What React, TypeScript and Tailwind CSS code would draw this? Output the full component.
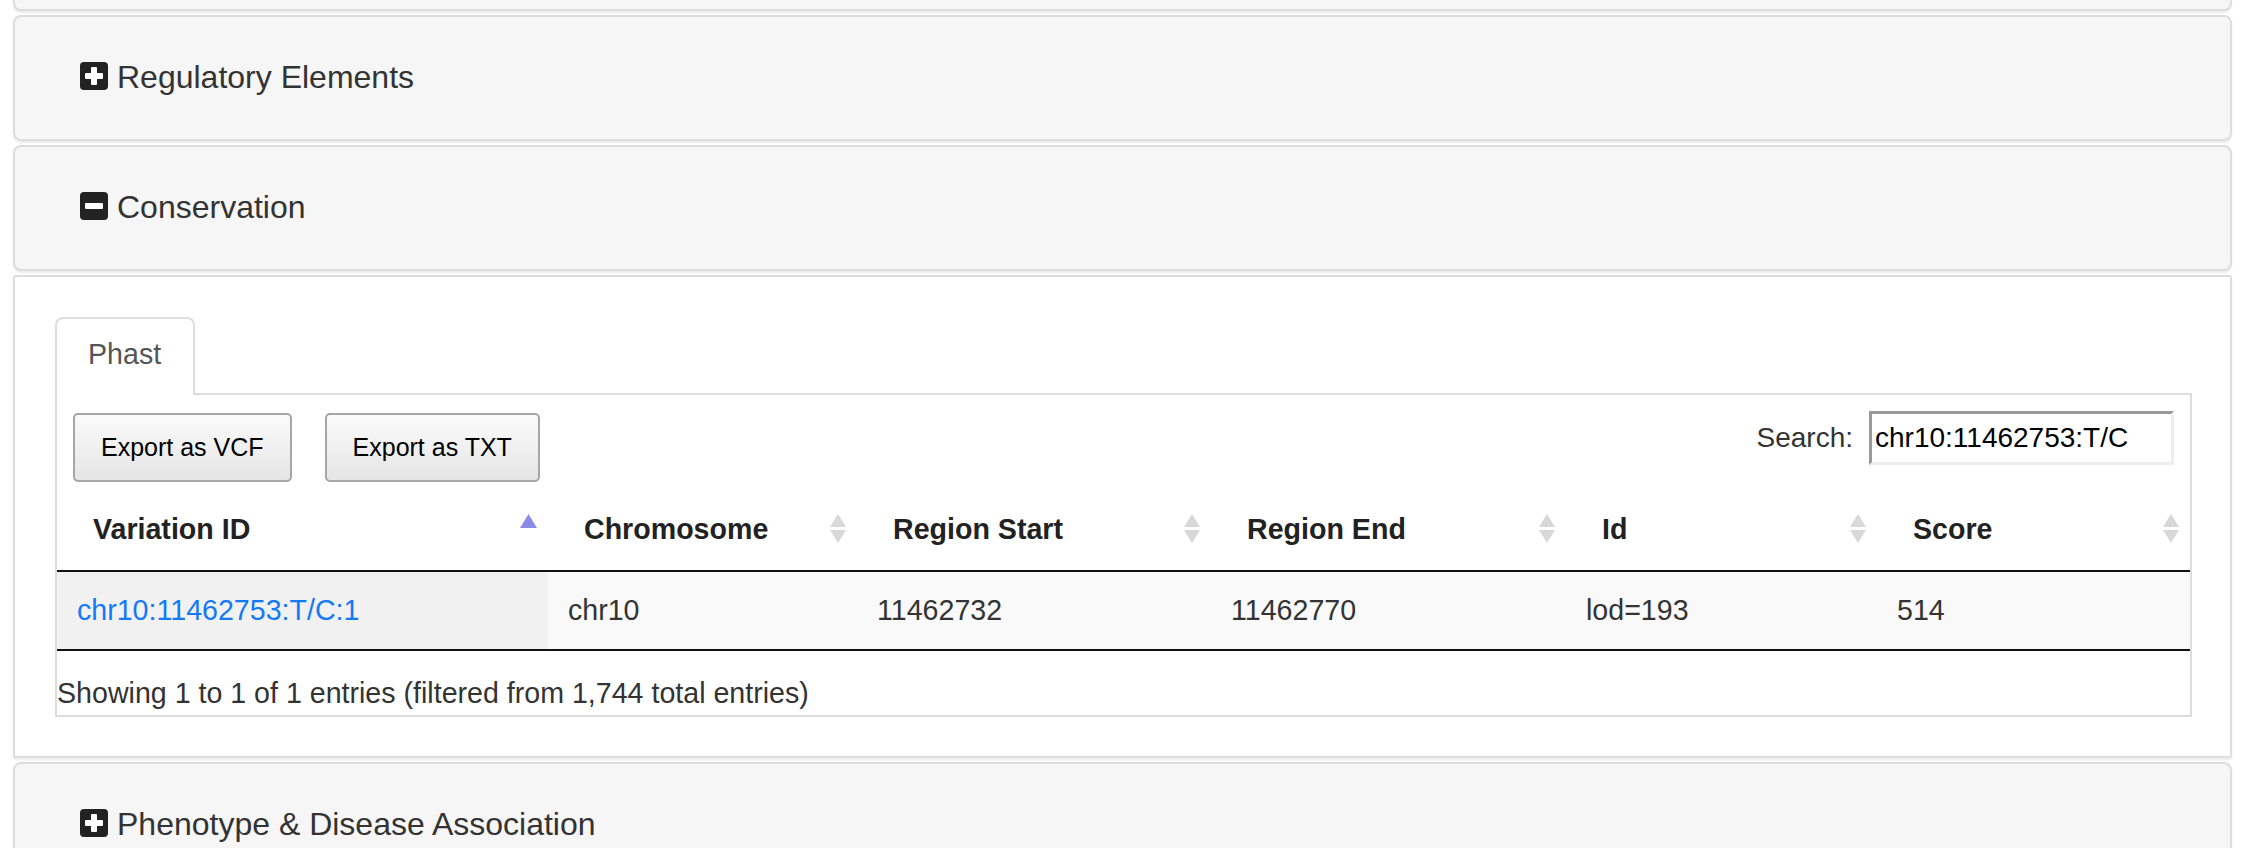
import React from 'react'

// ─── Icons ─────────────────────────────────────────────────────────────────────

function ToggleIcon({ open }: { open: boolean }) {
  return (
    <svg width="28" height="28" viewBox="0 0 28 28" className="shrink-0 -mt-[1px]">
      <rect x="0" y="0" width="28" height="28" rx="4" fill="#222" />
      <rect x="5" y="11" width="18" height="6" rx="1" fill="#fff" />
      {!open && <rect x="11" y="5" width="6" height="18" rx="1" fill="#fff" />}
    </svg>
  )
}

function SortArrows({ active }: { active?: boolean }) {
  if (active) {
    return (
      <svg width="17" height="30" viewBox="0 0 17 30" className="shrink-0">
        <polygon points="8.5,0 17,14 0,14" fill="#8b8be6" />
      </svg>
    )
  }
  return (
    <svg width="16" height="30" viewBox="0 0 16 30" className="shrink-0">
      <polygon points="8,0 16,13 0,13" fill="#d8d8d8" />
      <polygon points="0,16 16,16 8,29" fill="#d8d8d8" />
    </svg>
  )
}

// ─── Panels ────────────────────────────────────────────────────────────────────

function PanelHeading({ title, open }: { title: string; open: boolean }) {
  return (
    <div className="h-[126px] shrink-0 flex items-center pl-[65px] pb-[3px] bg-[#f6f6f6] border-2 border-[#dddddd] rounded-[8px] shadow-[0_2px_2px_rgba(0,0,0,0.08)]">
      <ToggleIcon open={open} />
      <span className="ml-[9px] text-[32px] leading-[40px] text-[#333]">{title}</span>
    </div>
  )
}

const columns = [
  { name: 'Variation ID', w: 'w-[491px]', active: true },
  { name: 'Chromosome', w: 'w-[309px]' },
  { name: 'Region Start', w: 'w-[354px]' },
  { name: 'Region End', w: 'w-[355px]' },
  { name: 'Id', w: 'w-[311px]' },
  { name: 'Score', w: 'w-[313px]' },
]

const row = ['chr10:11462753:T/C:1', 'chr10', '11462732', '11462770', 'lod=193', '514']

function PhastTable() {
  return (
    <div className="border-x-2 border-b-2 border-[#dddddd]">
      {/* Controls */}
      <div className="h-[93px] flex justify-between items-start pt-[16px]">
        <div className="flex gap-[33px] ml-[16px] mt-[2px]">
          {['Export as VCF', 'Export as TXT'].map(label => (
            <button
              key={label}
              className="h-[69px] px-[26px] text-[25px] text-black border-2 border-[#a6a6a6] rounded-[5px] bg-gradient-to-b from-[#fbfbfb] to-[#e5e5e5]"
            >
              {label}
            </button>
          ))}
        </div>
        <div className="flex items-center mr-[16px]">
          <span className="text-[28px] text-[#333] mr-[16px]">Search:</span>
          <input
            readOnly
            value="chr10:11462753:T/C"
            className="w-[305px] h-[54px] px-[3px] text-[28px] text-black bg-white border-[3px] border-t-[#999] border-l-[#999] border-b-[#eee] border-r-[#eee] outline-none"
          />
        </div>
      </div>

      {/* Header */}
      <div className="flex h-[84px] border-b-2 border-[#111]">
        {columns.map(c => (
          <div key={c.name} className={`${c.w} flex items-center justify-between pl-[36px] pr-[11px]`}>
            <span className="text-[28.6px] leading-[40px] font-bold text-[#222]">{c.name}</span>
            <SortArrows active={c.active} />
          </div>
        ))}
      </div>

      {/* Row */}
      <div className="flex h-[79px] border-b-2 border-[#111]">
        {row.map((v, i) => (
          <div
            key={i}
            className={`${columns[i].w} flex items-center pl-[20px] pb-[2px] text-[28.6px] leading-[40px] ${i === 0 ? 'bg-[#f1f1f1] text-[#1479f6]' : 'bg-[#f9f9f9] text-[#333]'}`}
          >
            {v}
          </div>
        ))}
      </div>

      {/* Info */}
      <div className="pt-[22px] pb-[2px] text-[28.6px] leading-[40px] text-[#333]">
        Showing 1 to 1 of 1 entries (filtered from 1,744 total entries)
      </div>
    </div>
  )
}

function ConservationBody() {
  return (
    <div className="shrink-0 bg-white border-2 border-[#dddddd] rounded-[3px] pt-[40px] pb-[39px] pl-[40px] pr-[38px] shadow-[0_2px_2px_rgba(0,0,0,0.08)]">
      <div className="flex items-end">
        <div className="w-[140px] h-[78px] flex items-center pl-[31px] pb-[5px] bg-white border-x-2 border-t-2 border-[#dddddd] rounded-t-[8px] text-[28.6px] text-[#555]">
          Phast
        </div>
        <div className="flex-1 border-b-2 border-[#dddddd]" />
      </div>
      <PhastTable />
    </div>
  )
}

export default function App() {
  return (
    <div className="w-[2248px] h-[848px] overflow-hidden bg-white font-['Liberation_Sans',Arial,sans-serif]">
      <div className="pl-[13px] pr-[16px] flex flex-col gap-[4px]">
        <div className="h-[11px] shrink-0 bg-[#f6f6f6] border-x-2 border-b-2 border-[#dddddd] rounded-b-[8px] shadow-[0_2px_2px_rgba(0,0,0,0.08)]" />
        <PanelHeading title="Regulatory Elements" open={false} />
        <PanelHeading title="Conservation" open />
        <ConservationBody />
        <PanelHeading title="Phenotype & Disease Association" open={false} />
      </div>
    </div>
  )
}
